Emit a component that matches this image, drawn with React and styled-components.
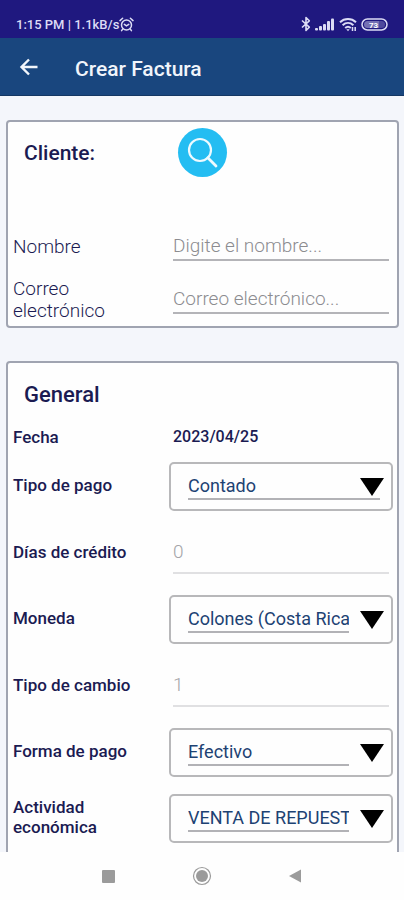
import React, {useState} from 'react';
import styled, {createGlobalStyle} from 'styled-components';

const GlobalStyle = createGlobalStyle`
* {
  box-sizing: border-box;
}

body {
  margin: 0;
  font-family: Roboto, "Liberation Sans", sans-serif;
}

button, input, select {
  font-family: inherit;
  border-radius: 0;
}
`;

const Screen = styled.div`
display: flex;
flex-direction: column;
height: 100vh;
background: #f4f6fb;
color: #1b1b52;
`;

const StatusBar = styled.div`
display: flex;
flex: none;
align-items: center;
justify-content: space-between;
height: 38px;
padding: 10px 16px 0;
background: #1f187f;
color: #dcdcf5;
font-size: 13px;
font-weight: 500;
`;

const StatusGroup = styled.div`
display: flex;
align-items: center;
gap: ${({$gap}) => $gap}px;
`;

const Header = styled.header`
display: flex;
flex: none;
align-items: center;
gap: 35px;
height: 58px;
padding: 0 18px;
background: #19467e;
border-bottom: 1px solid #143763;
color: #f1f5fb;

h1 {
  margin: 0;
  padding-top: 4px;
  font-size: 21px;
  line-height: 24px;
  font-weight: 500;
}
`;

const BackButton = styled.button`
display: flex;
padding: 0;
border: 0;
background: none;
color: inherit;
`;

const Content = styled.main`
flex: 1;
min-height: 0;
padding: 24px 5px 0 6px;
overflow-y: auto;
scrollbar-width: none;
`;

const Card = styled.section`
margin-bottom: 33px;
border: 2px solid #a0a4b1;
border-radius: 4px;
background: #fefefe;
`;

const CardHead = styled.div`
display: grid;
grid-template-columns: 154px minmax(0, 1fr);
align-items: ${({$tall}) => $tall ? 'start' : 'center'};
height: ${({$tall}) => $tall ? 98 : 58}px;
padding: 6px 16px 0;

h2 {
  margin: 0;
  font-size: ${({$tall}) => $tall ? 21 : 22}px;
  line-height: ${({$tall}) => $tall ? 50 : 26}px;
  font-weight: 500;
}
`;

const SearchButton = styled.button`
display: flex;
align-items: center;
justify-content: center;
width: 49px;
height: 49px;
padding: 0;
border: 0;
border-radius: 50%;
background: #24bdf2;
`;

const CardBody = styled.div`
padding-bottom: ${({$spaced}) => $spaced ? 16 : 0}px;
`;

const Row = styled.div`
display: grid;
grid-template-columns: 156px minmax(0, 1fr);
align-items: center;
height: ${({$height}) => $height}px;
padding: 0 4px 0 5px;
`;

const Label = styled.label`
max-width: 120px;
padding-bottom: ${({$raised}) => $raised ? 2 : 0}px;
font-size: ${({$light}) => $light ? 19 : 17}px;
line-height: ${({$light}) => $light ? 22 : 20}px;
font-weight: ${({$light}) => $light ? 300 : 500};
`;

const DateValue = styled.output`
padding-left: 4px;
font-size: 16px;
line-height: 20px;
font-weight: 500;
`;

const TextInput = styled.input`
min-width: 0;
height: ${({$tall}) => $tall ? 42 : 28}px;
margin: 0 4px;
padding: 0;
border: 0;
border-bottom: 2px solid ${({$tall}) => $tall ? '#e0e0e2' : '#b4b4b8'};
outline: none;
background: none;
color: #1b1b52;
font-size: 19px;
font-weight: 300;

&::placeholder {
  color: #8c8c90;
  opacity: 1;
}

&:disabled {
  color: #a4a4a8;
}
`;

const SelectFrame = styled.div`
position: relative;
display: flex;
height: 49px;
padding: 9px ${({$wide}) => $wide ? 11 : 42}px 9px 17px;
border: 2px solid #b8b8ba;
border-radius: 5px;

select {
  flex: 1;
  min-width: 0;
  padding: 0;
  border: 0;
  border-bottom: 2px solid #b2b2b6;
  outline: none;
  appearance: none;
  background: none;
  color: #1d4273;
  font-size: 18px;
  font-weight: 400;
}

svg {
  position: absolute;
  top: 13px;
  right: 6px;
  pointer-events: none;
}
`;

const NavBar = styled.nav`
display: flex;
flex: none;
align-items: center;
justify-content: space-between;
height: 48px;
padding: 0 99px;
background: #fefefe;

button {
  display: flex;
  padding: 0;
  border: 0;
  background: none;
}
`;

const AlarmIcon = () => (
  <svg width="15" height="15" viewBox="0 0 15 15" fill="none" stroke="currentColor" strokeWidth="1.5" strokeLinecap="round">
    <circle cx="7.5" cy="8" r="5"/>
    <path d="M5.4 7.4l2 1.5 2.4-1.6M1 3.6L3.6 1.3M14 3.6l-2.6-2.3M3.6 12.3l-1 1.3M11.4 12.3l1 1.3"/>
  </svg>
);

const BluetoothIcon = () => (
  <svg width="10" height="16" viewBox="0 0 10 16" fill="none" stroke="currentColor" strokeWidth="1.6" strokeLinejoin="round">
    <path d="M1 4.5l7.3 6.7L5 14.4V1.6l3.3 3.2L1 11.5"/>
  </svg>
);

const SignalIcon = () => (
  <svg width="20" height="13" viewBox="0 0 20 13" fill="currentColor">
    <rect x="0" y="10" width="3" height="2.5" rx="1"/>
    <rect x="4" y="8" width="3" height="4.5" rx="1"/>
    <rect x="8" y="6" width="3" height="6.5" rx="1"/>
    <rect x="12" y="3" width="3" height="9.5" rx="1"/>
    <rect x="16" y="0.5" width="3" height="12" rx="1"/>
  </svg>
);

const WifiIcon = () => (
  <svg width="18" height="15" viewBox="0 0 18 15" fill="none" stroke="currentColor" strokeWidth="2">
    <path d="M1 5.2c4.6-4.3 11.4-4.3 16 0M3.600 8.200c3.200-2.900 7.600-2.900 10.800 0M6.200 11c1.700-1.500 3.900-1.500 5.600 0"/>
    <path d="M9 14.300l-1.700-2h3.400z" fill="currentColor" stroke="none"/>
    <path d="M13.500 10v4M16.200 10v4" strokeWidth="1.500"/>
  </svg>
);

const BatteryIcon = () => (
  <svg width="27" height="13" viewBox="0 0 27 13">
    <rect x="1" y="1" width="25" height="11" rx="5.500" fill="none" stroke="currentColor" strokeWidth="1.500"/>
    <path d="M6.500 3H18v7H6.500a3.500 3.500 0 0 1 0-7z" fill="currentColor" opacity="0.450"/>
    <path d="M18 3h2.500a3.500 3.500 0 0 1 0 7H18z" fill="currentColor" opacity="0.250"/>
    <text x="12.500" y="9.500" fontSize="8" fontWeight="700" fill="#fff" textAnchor="middle">73</text>
  </svg>
);

const BackIcon = () => (
  <svg width="22" height="20" viewBox="0 0 22 20" fill="none" stroke="currentColor" strokeWidth="2.400">
    <path d="M19.500 10H4M11 2.500L3.500 10l7.500 7.500"/>
  </svg>
);

const SearchIcon = () => (
  <svg width="49" height="49" viewBox="0 0 49 49" fill="none" stroke="#eefaff" strokeWidth="2.200" strokeLinecap="round">
    <circle cx="22" cy="22" r="11"/>
    <path d="M29.800 29.800l8.200 8.300" strokeWidth="2.800"/>
  </svg>
);

const SelectField = ({id, label, options, wide}) => {
  const [value, setValue] = useState(options[0]);

  return (<Row $height={66}>
    <Label $raised htmlFor={id}>{label}</Label>
    <SelectFrame $wide={wide}>
      <select id={id} value={value} onChange={e => setValue(e.target.value)}>
        {options.map(option => <option key={option}>{option}</option>)}
      </select>
      <svg width="26" height="20" viewBox="0 0 26 20">
        <path d="M1 1h24L13 19z" fill="#000"/>
      </svg>
    </SelectFrame>
  </Row>);
};

const DisabledField = ({id, label, value}) => (
  <Row $height={67}>
    <Label $raised htmlFor={id}>{label}</Label>
    <TextInput id={id} $tall value={value} disabled/>
  </Row>
);

const App = () => (
  <Screen>
    <GlobalStyle/>
    <StatusBar>
      <StatusGroup $gap={0}>
        <span>1:15 PM | 1.1kB/s</span>
        <AlarmIcon/>
      </StatusGroup>
      <StatusGroup $gap={4}>
        <BluetoothIcon/>
        <SignalIcon/>
        <WifiIcon/>
        <BatteryIcon/>
      </StatusGroup>
    </StatusBar>
    <Header>
      <BackButton type="button" aria-label="Volver"><BackIcon/></BackButton>
      <h1>Crear Factura</h1>
    </Header>
    <Content>
      <Card>
        <CardHead $tall>
          <h2>Cliente:</h2>
          <SearchButton type="button" aria-label="Buscar cliente"><SearchIcon/></SearchButton>
        </CardHead>
        <CardBody>
          <Row $height={53}>
            <Label $light htmlFor="nombre">Nombre</Label>
            <TextInput id="nombre" type="text" placeholder="Digite el nombre..."/>
          </Row>
          <Row $height={53}>
            <Label $light htmlFor="correo">Correo electrónico</Label>
            <TextInput id="correo" type="email" placeholder="Correo electrónico..."/>
          </Row>
        </CardBody>
      </Card>
      <Card>
        <CardHead>
          <h2>General</h2>
        </CardHead>
        <CardBody $spaced>
          <Row $height={32}>
            <Label htmlFor="fecha">Fecha</Label>
            <DateValue id="fecha">2023/04/25</DateValue>
          </Row>
          <SelectField id="tipo-pago" label="Tipo de pago" options={['Contado', 'Crédito']} wide/>
          <DisabledField id="dias-credito" label="Días de crédito" value="0"/>
          <SelectField id="moneda" label="Moneda" options={['Colones (Costa Rica)']}/>
          <DisabledField id="tipo-cambio" label="Tipo de cambio" value="1"/>
          <SelectField id="forma-pago" label="Forma de pago" options={['Efectivo']}/>
          <SelectField id="actividad" label="Actividad económica" options={['VENTA DE REPUESTOS']}/>
        </CardBody>
      </Card>
    </Content>
    <NavBar>
      <button type="button" aria-label="Recientes">
        <svg width="18" height="18" viewBox="0 0 18 18"><rect x="3" y="3" width="13" height="13" rx="1" fill="#9b9b9b"/></svg>
      </button>
      <button type="button" aria-label="Inicio">
        <svg width="20" height="20" viewBox="0 0 20 20">
          <circle cx="10" cy="10" r="8.500" fill="none" stroke="#9b9b9b" strokeWidth="1.200"/>
          <circle cx="10" cy="10" r="6" fill="#9b9b9b"/>
        </svg>
      </button>
      <button type="button" aria-label="Atrás">
        <svg width="18" height="18" viewBox="0 0 18 18"><path d="M14 2.500v13L2 9z" fill="#9b9b9b"/></svg>
      </button>
    </NavBar>
  </Screen>
);

export default App;
